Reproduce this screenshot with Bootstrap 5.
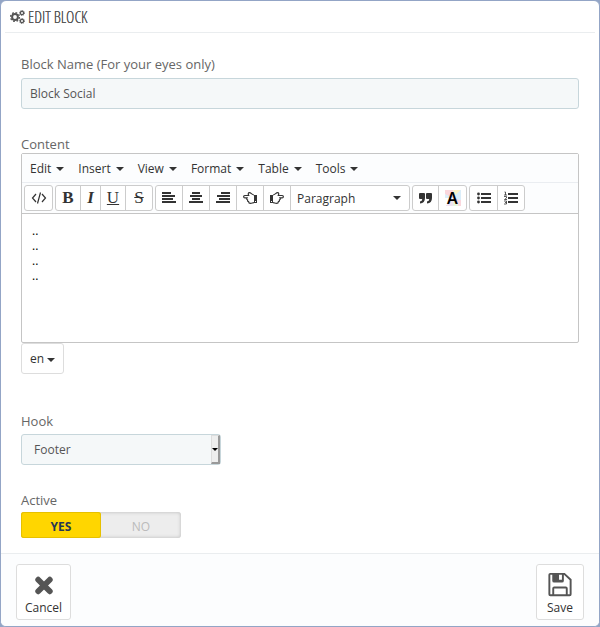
<!DOCTYPE html>
<html lang="en">
<head>
<meta charset="utf-8">
<meta name="viewport" content="width=device-width, initial-scale=1">
<title>Edit block</title>
<link href="https://cdn.jsdelivr.net/npm/bootstrap@5.3.0/dist/css/bootstrap.min.css" rel="stylesheet">
<style>
body{background:#93a5c6;font-family:"Open Sans","Noto Sans",sans-serif;font-size:12px;line-height:16px;color:#333}
.panel{border:1px solid #93a5c6;border-radius:6px;background:#fff;min-height:100vh;overflow:hidden}
.panel-title{height:32px;margin:0 4px;padding:0 4px 0 5px;border-bottom:1px solid #eaedef;color:#555;gap:3px}
.panel-title h1{font:300 16px/20px "Open Sans Condensed Light","Open Sans Condensed",sans-serif;text-shadow:0 0 0 #555}
.form-area{padding:0 20px}
.caption{display:block;font-size:13px;line-height:18px;color:#666}
.field.form-control,.field.form-select{height:31px;padding:0 8px;font-size:12px;color:#555;background:#f5f8f9;border:1px solid #c7d6db;border-radius:3px}
.field.form-select{padding:0 12px}
.hook-box{width:200px}
.spin{right:1px;top:1px;bottom:1px;width:9px;background:#eee;border:1px solid #ddd;border-right:2px solid #999;border-bottom:2px solid #999;pointer-events:none}
.editor{border:1px solid #c5c5c5;border-radius:2px}
.menu-row{height:29px;background:#fcfdfe;border-bottom:1px solid #eaedf1;padding:2px 0 0 4px}
.menu-row button{border:0;background:none;padding:0 4px;color:#333;margin-right:6px}
.tri{display:inline-block;border:4px solid transparent;border-top-color:#333;border-bottom:0}
.menu-row .tri{margin:0 0 2px 5px}
.lang .tri{margin:0 0 1px 3px}
.spin .tri{border-width:3px 3px 0;border-top-color:#000}
.tool-row{height:31px;background:#fcfdfe;border-bottom:1px solid #c5c5c5;padding:2px;gap:2px}
.tools{height:26px;border:1px solid #ccc;border-radius:3px;background:#fff;overflow:hidden}
.tools button{border:0;border-left:1px solid #ccc;background:none;padding:0;width:27px;color:#333}
.tools>:first-child{border-left:0}
.tools .w-t{width:24px}.tools .w-s{width:20px}.tools .w-m{width:25px}.tools .w-n{width:26px}.tools .w-l{width:28px}
.glyph{font:17px/20px "Liberation Serif",serif}
.para{width:119px;border-left:1px solid #ccc}
.para select{border:0;padding:0 6px;font-size:12px;height:26px;color:#333;background:none;border-radius:0}
.para .tri{right:8px;top:10px;pointer-events:none}
.tint{width:16px;height:16px;color:#000;font:600 16px/16px "Noto Sans",sans-serif;background:conic-gradient(#fdf3c9 12%,#dbeefa 0 30%,#fad7dd 0 40%,#e6f5de 0 50%,#f1e2f1 0 62%,#fff 0 75%,#dbeefa 0 82%,#fad7dd 0)}
.doc{height:128px;padding:9px 10px;line-height:15px;color:#000}
.lang{height:31px;width:43px;border:1px solid #ddd;border-radius:3px;background:#fff;padding:0;color:#333}
.choice{width:160px;height:26px;border-radius:3px;background:#ededed;box-shadow:inset 0 0 3px 1px #ccc}
.choice label{width:80px;color:#bbb;line-height:30px;height:26px;text-align:center;cursor:pointer;border-radius:3px}
.choice input:checked+label{background:#ffd600;box-shadow:inset 0 0 0 1px #e6c000;color:#263755;font-weight:700}
.panel-foot{height:73px;background:#fcfdfe;border-top:1px solid #eaedef;padding:10px 15px 6px}
.panel-foot button{height:56px;border:1px solid #ddd;border-radius:3px;background:#fff;padding:6px 8px 3px;color:#333}
.panel-foot .save{padding-left:10px;padding-right:10px}
.g-name{margin-top:22px}.g-name .caption{margin-bottom:5px}.g-content{margin-top:26px}.g-hook{margin-top:38px}.g-active{margin-top:26px}.g-active .caption{margin-bottom:3px}
svg{display:block}
</style>
</head>
<body>
<form class="panel d-flex flex-column">
<header class="panel-title d-flex align-items-center">
<svg width="15" height="14" viewBox="0 0 15 14" fill="none" stroke="#555"><circle cx="5" cy="7" r="2.9" stroke-width="2"/><circle cx="5" cy="7" r="4.4" stroke-width="1.4" stroke-dasharray="1.7 1.75"/><circle cx="12" cy="3" r="1.6" stroke-width="1.2"/><circle cx="12" cy="3" r="2.5" stroke-width=".9" stroke-dasharray="1.1 .86"/><circle cx="12" cy="11" r="1.6" stroke-width="1.2"/><circle cx="12" cy="11" r="2.5" stroke-width=".9" stroke-dasharray="1.1 .86"/></svg>
<h1 class="m-0">EDIT BLOCK</h1>
</header>
<main class="form-area flex-grow-1">
<div class="g-name"><label class="caption" for="name">Block Name (For your eyes only)</label>
<input class="form-control field" id="name" value="Block Social"></div>
<div class="g-content"><span class="caption" id="content-label">Content</span>
<div class="editor">
<div class="menu-row d-flex align-items-center">
<button type="button">Edit<i class="tri"></i></button><button type="button">Insert<i class="tri"></i></button><button type="button">View<i class="tri"></i></button><button type="button">Format<i class="tri"></i></button><button type="button">Table<i class="tri"></i></button><button type="button">Tools<i class="tri"></i></button>
</div>
<div class="tool-row d-flex align-items-start">
<div class="tools d-flex"><button type="button" class="d-flex align-items-center justify-content-center" aria-label="Source code"><svg width="16" height="12" viewBox="0 0 16 12" fill="none" stroke="#333" stroke-width="1.2"><path d="M5 2 1.5 6 5 10M11 2l3.500 4L11 10M9.500 .5 6.500 11.500"/></svg></button></div>
<div class="tools d-flex"><button type="button" class="w-t glyph fw-bold">B</button><button type="button" class="w-s glyph fst-italic fw-bold">I</button><button type="button" class="w-m glyph text-decoration-underline">U</button><button type="button" class="glyph text-decoration-line-through">S</button></div>
<div class="tools d-flex">
<button type="button" class="w-n d-flex align-items-center justify-content-center" aria-label="Align left"><svg width="14" height="12" viewBox="0 0 14 12" fill="#333"><path d="M0 0h9v2H0zM0 3h13v2H0zM0 6h11v2H0zM0 9h14v2H0z"/></svg></button>
<button type="button" class="d-flex align-items-center justify-content-center" aria-label="Align center"><svg width="14" height="12" viewBox="0 0 14 12" fill="#333"><path d="M3 0h8v2H3zM1 3h12v2H1zM3 6h8v2H3zM0 9h14v2H0z"/></svg></button>
<button type="button" class="d-flex align-items-center justify-content-center" aria-label="Align right"><svg width="14" height="12" viewBox="0 0 14 12" fill="#333"><path d="M5 0h9v2H5zM1 3h13v2H1zM3 6h11v2H3zM0 9h14v2H0z"/></svg></button>
<button type="button" class="d-flex align-items-center justify-content-center" aria-label="Previous"><svg width="14" height="12" viewBox="0 0 14 12"><path id="hand" d="M11 3C9 3 8 .6 6.500.6 5 .6 5 2 5.700 3.500H1.800C.3 3.500.3 5.900 1.800 5.900H4C3.500 6.700 3.700 7.500 4.500 7.800 4.300 8.800 4.800 9.500 5.600 9.700 5.600 11 6.300 11.400 7.500 11.400c1.500 0 2-.8 3.500-.8" fill="none" stroke="#333" stroke-width="1.200"/><path d="M11 3h3v8h-3z" fill="#333"/><path d="M12 9h1v1h-1z" fill="#fff"/></svg></button>
<button type="button" class="d-flex align-items-center justify-content-center" aria-label="Next"><svg width="14" height="12" viewBox="0 0 14 12"><g transform="matrix(-1 0 0 1 14 0)"><use href="#hand"/><path d="M11 3h3v8h-3z" fill="#333"/><path d="M12 9h1v1h-1z" fill="#fff"/></g></svg></button>
<div class="para position-relative"><select class="form-select" aria-label="Block format"><option>Paragraph</option><option>Heading 1</option></select><i class="tri position-absolute"></i></div>
</div>
<div class="tools d-flex">
<button type="button" class="w-m d-flex align-items-center justify-content-center" aria-label="Blockquote"><svg width="13" height="11" viewBox="0 0 13 11" fill="#333"><path id="quo" d="M1 0h4q1 0 1 1v4q0 5-5 5.500V8.500Q3.300 8 3.300 6H1Q0 6 0 5V1Q0 0 1 0z"/><use href="#quo" x="7"/></svg></button>
<button type="button" class="w-l d-flex align-items-center justify-content-center" aria-label="Text color"><span class="tint">A</span></button></div>
<div class="tools d-flex">
<button type="button" class="d-flex align-items-center justify-content-center" aria-label="Bullet list"><svg width="14" height="12" viewBox="0 0 14 12" fill="#333"><path d="M4 1h10v2H4zM4 5h10v2H4zM4 9h10v2H4z"/><circle cx="1.500" cy="2" r="1.400"/><circle cx="1.500" cy="6" r="1.400"/><circle cx="1.500" cy="10" r="1.400"/></svg></button>
<button type="button" class="d-flex align-items-center justify-content-center" aria-label="Numbered list"><svg width="14" height="14" viewBox="0 0 14 14" fill="#333"><path d="M4 2h10v2H4zM4 6h10v2H4zM4 10h10v2H4z"/><path d="M.5 1h1v3M0 4h3M0 5.500h2.500V7L.5 8.500H3M0 10h2.500v3H0M1 11.500h1.500" fill="none" stroke="#333" stroke-width=".8"/></svg></button></div>
</div>
<div class="doc" contenteditable="true" role="textbox" aria-multiline="true" aria-labelledby="content-label">..<br>..<br>..<br>..</div>
</div>
<button type="button" class="lang d-block">en<i class="tri"></i></button></div>
<div class="g-hook"><label class="caption mb-1" for="hook">Hook</label>
<div class="hook-box position-relative"><select class="form-select field" id="hook"><option>Footer</option><option>Header</option></select><span class="spin position-absolute d-flex align-items-center justify-content-center"><i class="tri"></i></span></div></div>
<div class="g-active" role="radiogroup" aria-labelledby="active-label"><span class="caption" id="active-label">Active</span>
<div class="choice d-flex"><input class="visually-hidden" type="radio" name="active" id="yes" checked><label for="yes">YES</label><input class="visually-hidden" type="radio" name="active" id="no"><label for="no">NO</label></div></div>
</main>
<footer class="panel-foot d-flex justify-content-between">
<button type="button" class="d-flex flex-column align-items-center justify-content-between"><svg width="20" height="30" viewBox="0 0 20 30"><path d="M4 9l12 12m0-12-12 12" stroke="#555" stroke-width="6" stroke-linecap="round"/></svg>Cancel</button>
<button type="submit" class="save d-flex flex-column align-items-center justify-content-between"><svg width="24" height="30" viewBox="0 0 24 30" fill="none" stroke="#555" stroke-width="2"><path d="M2 3h14.500L23 9v15q0 1-1 1H2q-1 0-1-1V4q0-1 1-1zM5 25v-7q0-1 1-1h12q1 0 1 1v7"/><path d="M5 3h10v7q0 1-1 1H6q-1 0-1-1z" fill="#555"/><path d="M11 4h3v5h-3z" fill="#fff" stroke="none"/></svg>Save</button>
</footer>
</form>
<script src="https://cdn.jsdelivr.net/npm/bootstrap@5.3.0/dist/js/bootstrap.bundle.min.js"></script>
</body>
</html>
